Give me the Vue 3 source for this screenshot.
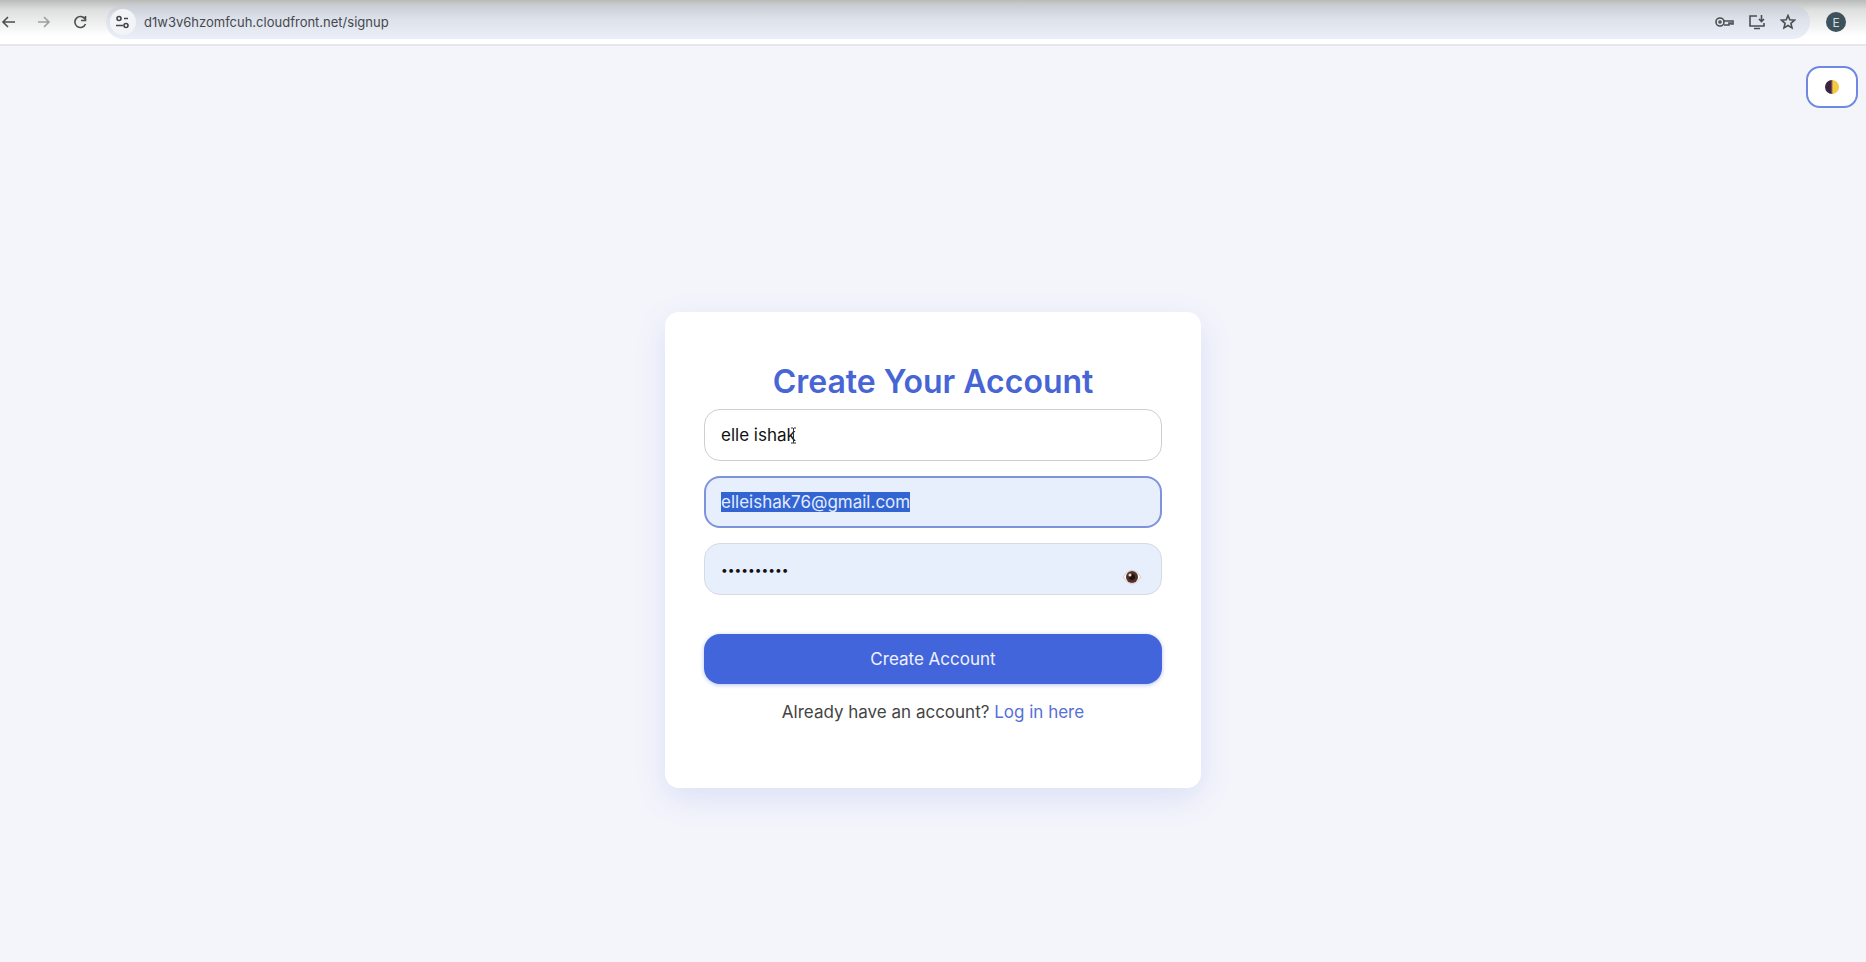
<script setup>
import { ref, onMounted } from "vue";

const name = ref("elle ishak");
const email = ref("elleishak76@gmail.com");
const password = ref("password12");
const showPassword = ref(false);
const darkMode = ref(false);
const url = ref("d1w3v6hzomfcuh.cloudfront.net/signup");
const emailInput = ref(null);

onMounted(() => {
  emailInput.value.focus();
  emailInput.value.select();
});
</script>

<template>
  <div class="window">
    <header class="toolbar">
      <nav class="nav-buttons">
        <button type="button" class="icon-button" aria-label="Back">
          <svg width="16" height="16" viewBox="0 0 16 16">
            <path d="M15 8H3M8 3L3 8l5 5" />
          </svg>
        </button>
        <button type="button" class="icon-button muted" aria-label="Forward">
          <svg width="16" height="16" viewBox="0 0 16 16">
            <path d="M2 8h11M8 3l5 5-5 5" />
          </svg>
        </button>
        <button type="button" class="icon-button" aria-label="Reload">
          <svg width="16" height="16" viewBox="0 0 16 16">
            <path d="M13 5A5.500 5.500 0 1 0 13.500 10M13.500 2v4.500H9" />
          </svg>
        </button>
      </nav>
      <div class="address-bar">
        <button type="button" class="site-info" aria-label="Site information">
          <svg width="16" height="16" viewBox="0 0 16 16">
            <path d="M1 11.500h7M9 4.500h4" />
            <circle cx="4" cy="4.500" r="2" />
            <circle cx="11" cy="11.500" r="2" />
          </svg>
        </button>
        <input v-model="url" class="url" type="text" aria-label="Address" />
        <div class="address-actions">
          <button type="button" class="icon-button" aria-label="Passwords">
            <svg width="20" height="16" viewBox="0 0 20 16">
              <circle cx="6" cy="8" r="4" />
              <circle cx="6" cy="8" r="1" />
              <path d="M10 7h9v3h-2v-1h-2v2h-5" />
            </svg>
          </button>
          <button type="button" class="icon-button" aria-label="Install app">
            <svg width="18" height="16" viewBox="0 0 18 16">
              <path d="M9 2H2v10h14V9M6 14.500h6M13.500 1v6M11 5l2.500 2.500L16 5" />
            </svg>
          </button>
          <button type="button" class="icon-button" aria-label="Bookmark">
            <svg width="16" height="16" viewBox="0 0 16 16">
              <path
                d="M8 1.500l1.800 4.300 4.700.4-3.600 3.100 1.100 4.600L8 11.500l-4 2.400 1.100-4.600-3.600-3.100 4.700-.4z"
              />
            </svg>
          </button>
        </div>
      </div>
      <button type="button" class="avatar">E</button>
    </header>

    <main class="page">
      <button
        type="button"
        class="theme-toggle"
        aria-label="Toggle theme"
        @click="darkMode = !darkMode"
      >
        <svg width="16" height="16" viewBox="0 0 16 16">
          <path d="M8 1a7 7 0 0 0 0 14z" fill="#3a2446" />
          <path d="M8 1a7 7 0 0 1 0 14z" fill="#f6c944" />
          <path d="M8 1v14" stroke="#b0703c" />
        </svg>
      </button>

      <form class="card" @submit.prevent>
        <h1 class="title">Create Your Account</h1>
        <div class="field">
          <input v-model="name" class="text-input" type="text" aria-label="Name" />
          <svg class="text-cursor" width="7" height="17" viewBox="0 0 7 17">
            <path d="M1 1h2l.5.500L4 1h2M3.500 1v15M1 16h5" />
          </svg>
        </div>
        <div class="field">
          <input
            ref="emailInput"
            v-model="email"
            class="text-input filled"
            type="email"
            aria-label="Email"
          />
        </div>
        <div class="field">
          <input
            v-model="password"
            class="text-input filled"
            :class="{ masked: !showPassword }"
            :type="showPassword ? 'text' : 'password'"
            aria-label="Password"
          />
          <button
            type="button"
            class="eye"
            aria-label="Show password"
            @click="showPassword = !showPassword"
          >
            <svg width="20" height="16" viewBox="0 0 20 16">
              <path
                d="M1 8q9-14 18 0q-9 14-18 0z"
                fill="#fcf8f8"
                stroke="#d9c8cc"
              />
              <circle cx="10" cy="8" r="6" fill="#54302b" />
              <circle cx="10" cy="8" r="3" fill="#1d1112" />
              <circle cx="8" cy="6" r="1.500" fill="#e8dedc" />
            </svg>
          </button>
        </div>
        <button type="submit" class="submit">Create Account</button>
        <p class="login">
          Already have an account? <a href="#login">Log in here</a>
        </p>
      </form>
    </main>
  </div>
</template>

<style>
body {
  margin: 0;
}
</style>

<style scoped>
* {
  box-sizing: border-box;
}

button,
input {
  font-family: inherit;
}

.window {
  display: flex;
  flex-direction: column;
  min-height: 100vh;
  font-family: Inter, "Open Sans", sans-serif;
  background-color: #f4f5fb;
}

.toolbar {
  display: flex;
  align-items: center;
  height: 46px;
  padding-right: 20px;
  background: linear-gradient(#b9bbbb, #dedfdf 10px, #ffffff 36px);
  border-bottom: 2px solid #e6e7ea;
}

.nav-buttons {
  display: flex;
  gap: 20px;
  margin-right: 18px;
}

.icon-button {
  display: flex;
  padding: 0;
  border: none;
  background: none;
  color: #4b4f52;
  cursor: pointer;
}
.icon-button svg,
.site-info svg {
  fill: none;
  stroke: currentColor;
  stroke-width: 1.6;
}
.icon-button.muted {
  color: #9c9fa1;
}

.address-bar {
  display: flex;
  flex: 1;
  align-items: center;
  gap: 8px;
  height: 34px;
  padding: 0 14px 0 4px;
  border-radius: 17px;
  background: linear-gradient(#c9cdd3, #dde1ea 14px, #ebeff9);
}

.address-actions {
  display: flex;
  gap: 14px;
}

.site-info {
  display: flex;
  align-items: center;
  justify-content: center;
  width: 26px;
  height: 26px;
  padding: 0;
  border: none;
  border-radius: 50%;
  background-color: #f3f4f7;
  color: #414547;
}

.url {
  flex: 1;
  padding: 0;
  border: none;
  outline: none;
  background: none;
  color: #45484c;
  font-size: 13px;
}

.avatar {
  width: 20px;
  height: 20px;
  margin-left: 16px;
  padding: 0;
  border: none;
  border-radius: 50%;
  background-color: #3d525b;
  color: #d5dde0;
  font-size: 12px;
}

.page {
  position: relative;
  display: flex;
  flex: 1;
  justify-content: center;
  align-items: flex-start;
  padding: 266px 20px 40px;
}

.theme-toggle {
  position: absolute;
  top: 20px;
  right: 8px;
  display: flex;
  align-items: center;
  justify-content: center;
  width: 52px;
  height: 42px;
  padding: 0;
  border: 2px solid #6f88e2;
  border-radius: 14px;
  background-color: #ffffff;
}

.card {
  display: flex;
  flex-direction: column;
  width: 100%;
  max-width: 536px;
  padding: 46px 39px 64px;
  border-radius: 14px;
  background-color: #ffffff;
  box-shadow: 0 10px 32px rgba(67, 97, 218, 0.14);
}

.title {
  margin: 0 0 3px;
  color: #4765d4;
  font-size: 32px;
  font-weight: 600;
  line-height: 48px;
  text-align: center;
}

.field {
  position: relative;
  margin-bottom: 15px;
}

.text-input {
  display: block;
  width: 100%;
  height: 52px;
  padding: 0 16px;
  border: 1px solid #cfcfcf;
  border-radius: 16px;
  outline: none;
  background-color: #ffffff;
  color: #111111;
  font-size: 17px;
}
.text-input.filled {
  border-color: #d6dae2;
  background-color: #e7effd;
}
.text-input.masked {
  font-size: 12px;
}
.text-input:focus {
  border: 2px solid #7f92dc;
  padding: 0 15px;
}
.text-input::selection {
  background-color: #3264d2;
  color: #e3ecff;
}

.text-cursor {
  position: absolute;
  top: 18px;
  left: 86px;
  fill: none;
  stroke: #333333;
  pointer-events: none;
}

.eye {
  position: absolute;
  top: 26px;
  right: 20px;
  display: flex;
  padding: 0;
  border: none;
  background: none;
}

.submit {
  height: 50px;
  margin-top: 24px;
  border: none;
  border-radius: 16px;
  background-color: #4365db;
  box-shadow: 0 1px 4px rgba(67, 101, 219, 0.4);
  color: #eef2ff;
  font-size: 17px;
}

.login {
  margin: 16px 0 0;
  color: #444444;
  font-size: 17px;
  line-height: 24px;
  text-align: center;
}
.login a {
  color: #5570d8;
  text-decoration: none;
}
</style>
